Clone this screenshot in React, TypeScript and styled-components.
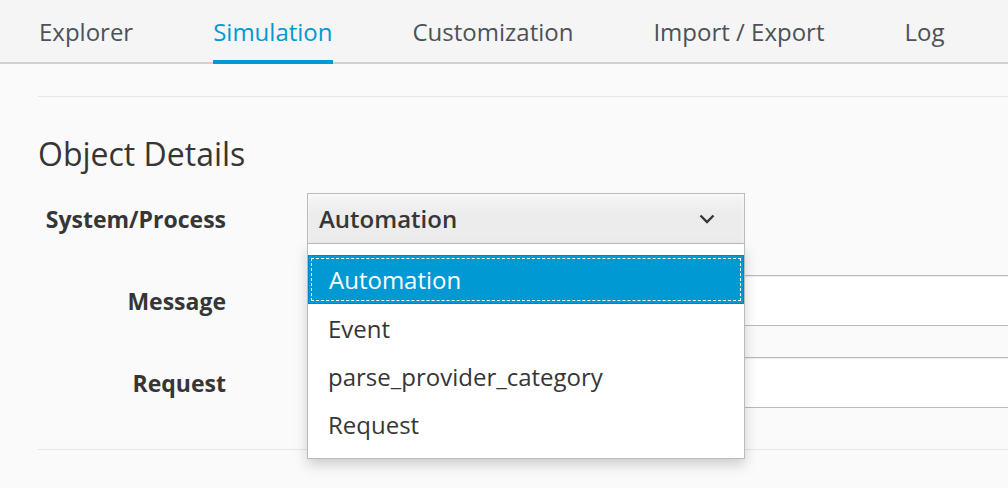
import React, { useState } from 'react'
import styled, { createGlobalStyle, css } from 'styled-components'

const GlobalStyle = createGlobalStyle`
  html, body {
    margin: 0;
    padding: 0;
    background: #fafafa;
    font-family: "Open Sans", "Liberation Sans", sans-serif;
    overflow: hidden;
  }
`

const Page = styled.div`
  min-height: 488px;
  background: #fafafa;
`

const TabBar = styled.nav`
  display: flex;
  gap: 80px;
  height: 62px;
  padding-left: 39px;
  background: #f5f5f5;
  border-bottom: 2px solid #d1d1d1;
`

const Tab = styled.a<{ $active?: boolean }>`
  position: relative;
  display: flex;
  align-items: center;
  font-size: 24px;
  color: #4d5258;
  white-space: nowrap;
  cursor: pointer;
  ${({ $active }) => $active && css`
    color: #0099d3;
    &::after {
      content: '';
      position: absolute;
      left: 0;
      right: 0;
      bottom: -2px;
      height: 4px;
      background: #0099d3;
    }
  `}
`

const Content = styled.div`
  padding-left: 38px;
`

const Divider = styled.div<{ $top: number }>`
  margin-top: ${({ $top }) => $top}px;
  height: 1px;
  background: #e6e6e6;
`

const Heading = styled.h2`
  margin: 38px 0 0;
  font-size: 32px;
  line-height: 38px;
  font-weight: 400;
  color: #363636;
`

const Form = styled.div`
  display: grid;
  grid-template-columns: 188px 1fr;
  column-gap: 81px;
  row-gap: 31px;
  margin-top: 20px;
  align-items: center;
`

const Label = styled.label`
  text-align: right;
  font-size: 23px;
  font-weight: 700;
  color: #363636;
`

const SelectWrap = styled.div`
  position: relative;
  width: 438px;
  z-index: 2;
`

const SelectButton = styled.button`
  display: flex;
  align-items: center;
  justify-content: space-between;
  width: 100%;
  height: 51px;
  padding: 0 29px 0 11px;
  background: linear-gradient(to bottom, #f5f5f5 0%, #ececec 40%, #ececec 100%);
  border: 1px solid #bbbbbb;
  box-shadow: inset 0 2px 4px rgba(255, 255, 255, 0.6);
  font-family: inherit;
  font-size: 24px;
  font-weight: 600;
  color: #363636;
  cursor: pointer;
`

const Menu = styled.ul`
  position: absolute;
  top: 100%;
  left: 0;
  right: 0;
  margin: 0;
  padding: 11px 0 10px;
  list-style: none;
  background: #fff;
  border: 1px solid #bbbbbb;
  border-top: none;
  box-shadow: 0 6px 12px rgba(0, 0, 0, 0.175);
`

const MenuItem = styled.li<{ $selected?: boolean }>`
  display: flex;
  align-items: center;
  height: 48px;
  padding: 0 20px;
  font-size: 24px;
  color: #363636;
  cursor: pointer;
  ${({ $selected }) => $selected && css`
    height: 47px;
    background: #0099d3;
    border: 1px solid #0085c4;
    color: #fff;
    outline: 1px dashed #fff;
    outline-offset: -4px;
  `}
`

const TextInput = styled.input`
  width: 900px;
  height: 51px;
  box-sizing: border-box;
  border: 1px solid #bbbbbb;
  border-left: none;
  background: #fff;
  box-shadow: inset 0 1px 1px rgba(0, 0, 0, 0.075);
  font-family: inherit;
  font-size: 22px;
`

const tabs = ['Explorer', 'Simulation', 'Customization', 'Import / Export', 'Log']
const options = ['Automation', 'Event', 'parse_provider_category', 'Request']

function Chevron() {
  return (
    <svg width="16" height="10" viewBox="0 0 16 10">
      <polyline points="1.5,1.5 8,8 14.5,1.5" fill="none" stroke="#363636" strokeWidth="2.4" />
    </svg>
  )
}

function App() {
  const [value, setValue] = useState<string>('Automation')

  return (
    <Page>
      <GlobalStyle />
      <TabBar>
        {tabs.map((t) => (
          <Tab key={t} $active={t === 'Simulation'}>{t}</Tab>
        ))}
      </TabBar>
      <Content>
        <Divider $top={32} />
        <Heading>Object Details</Heading>
        <Form>
          <Label>System/Process</Label>
          <SelectWrap>
            <SelectButton>
              <span>{value}</span>
              <Chevron />
            </SelectButton>
            <Menu>
              {options.map((o) => (
                <MenuItem key={o} $selected={o === value} onClick={() => setValue(o)}>
                  {o}
                </MenuItem>
              ))}
            </Menu>
          </SelectWrap>
          <Label>Message</Label>
          <TextInput />
          <Label>Request</Label>
          <TextInput />
        </Form>
        <Divider $top={41} />
      </Content>
    </Page>
  )
}

export default App
